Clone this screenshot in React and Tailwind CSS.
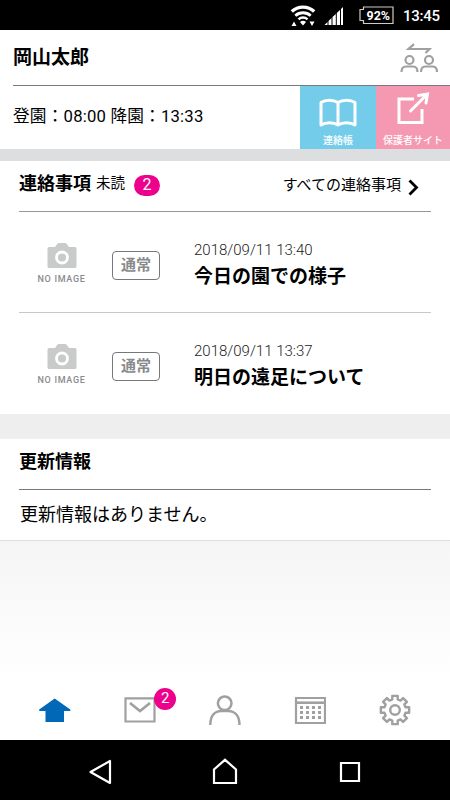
// App.jsx
import React from "react";

const MESSAGES = [
    { date: "2018/09/11 13:40", title: "今日の園での様子" },
    { date: "2018/09/11 13:37", title: "明日の遠足について" },
];

const StatusBar = () => (
    <div className="flex h-[30px] bg-black text-white">
        <svg width="450" height="30" viewBox="0 0 450 30" fill="none">
            {/* wifi */}
            <path d="M291.8 11.5a16.500 16.500 0 0 1 22.400 0" stroke="#fff" strokeWidth="3.4" />
            <path d="M295.300 15.700a11.500 11.500 0 0 1 15.400 0" stroke="#fff" strokeWidth="2.800" />
            <path d="M298.500 19.300a6.500 6.500 0 0 1 9 0" stroke="#fff" strokeWidth="2.400" />
            <path d="M300 22a4 4 0 0 1 6 0L303 25.500z" fill="#fff" />
            <path d="M291.500 26l2.500-4.500 2.500 4.500zM309.500 21.500h5L312 26z" fill="#fff" />
            {/* signal */}
            <path d="M324.500 25l3-3v3zM328.500 21l3-3v7h-3zM332.500 17l3.300-3v11h-3.300zM336.800 13l3.200-3v15h-3.200zM341 9l2-2v18h-2z" fill="#fff" />
            {/* battery */}
            <path d="M363.500 7H393v16.500h-29.500v-3H360V9.500h3.500z" stroke="#ccc" strokeWidth="1.200" />
            <text x="366.500" y="19.700" fill="#fff" fontFamily="Roboto" fontSize="12.500" fontWeight="700" textLength="23.500" lengthAdjust="spacingAndGlyphs">92%</text>
            <text x="403" y="21" fill="#fff" fontFamily="Roboto" fontSize="15" fontWeight="500" textLength="37">13:45</text>
        </svg>
    </div>
);

const SwitchUserIcon = () => (
    <svg width="38" height="30" viewBox="0 0 38 30" fill="none" stroke="#a0a0a0" strokeWidth="2.200">
        <path d="M14 1.200L8.500 6h21L25.500 10" />
        <circle cx="9.500" cy="17" r="4" />
        <circle cx="29" cy="17" r="4" />
        <path d="M1.500 29c0-4 2-5.500 4.500-5.500h7c2.500 0 4.500 1.500 4.500 5.500M21 29c0-4 2-5.500 4.500-5.500h7c2.500 0 4.500 1.500 4.500 5.500" />
    </svg>
);

const BookIcon = () => (
    <svg width="38" height="30" viewBox="0 0 38 30" fill="none" stroke="#fff" strokeWidth="3" strokeLinejoin="round">
        <path d="M19 4.500C14.500 1.500 6.500 1.500 2 4.500v22.500c4.500-3 12.500-3 17 0 4.500-3 12.500-3 17 0V4.500C31.500 1.500 23.500 1.500 19 4.500zM19 4.500V27" />
    </svg>
);

const ExternalIcon = () => (
    <svg width="34" height="34" viewBox="0 0 34 34" fill="none" stroke="#fff" strokeWidth="3" strokeLinecap="round">
        <path d="M18 8H3v23.500h23V18" strokeLinecap="butt" />
        <path d="M14.500 20L31.500 3M22.500 4.500l9-1.500-1.500 9" />
    </svg>
);

const NoImage = () => (
    <div className="flex w-[48px] flex-col items-center">
        <svg className="ml-[2px]" width="30" height="26" viewBox="0 0 30 26" fill="#c9caca">
            <path d="M2 4h6l2.500-3.500Q11 0 12 0h6q1 0 1.500.500L22 4h6q1.500 0 1.500 1.500v18q0 1.500-1.500 1.500H2Q.500 25 .500 23.500v-18Q.500 4 2 4z" />
            <circle cx="15" cy="14.500" r="5.500" fill="none" stroke="#fff" strokeWidth="2.800" />
        </svg>
        <span className="mt-[5px] ml-[1px] whitespace-nowrap font-['Roboto'] text-[9px] leading-[11px] font-medium tracking-[0.700px] text-[#8a8b8c]">NO IMAGE</span>
    </div>
);

const MessageRow = ({ date, title }) => (
    <div className="flex h-[101px] pt-[31px] pl-[18px]">
        <NoImage />
        <span className="mt-[8px] ml-[27px] flex h-[29px] w-[48px] items-center justify-center rounded-[4px] border border-[#77787b] text-[15px] leading-[27px] font-bold text-[#898a8c]">通常</span>
        <div className="ml-[34px] -mt-[2px]">
            <p className="font-['Roboto'] text-[15px] leading-[18px] font-light text-[#222]">{date}</p>
            <p className="mt-[5px] text-[19px] leading-[26px] font-bold">{title}</p>
        </div>
    </div>
);

const gearPath = () => {
    const pts = [];
    for (let i = 0; i < 8; i++) {
        const base = (i * Math.PI) / 4;
        [[-0.250, 10.900], [-0.190, 14.400], [0.190, 14.400], [0.250, 10.900]].forEach(([a, r]) => {
            pts.push(`${(16 + r * Math.cos(base + a)).toFixed(2)} ${(16 + r * Math.sin(base + a)).toFixed(2)}`);
        });
    }
    return `M${pts.join("L")}z`;
};

const TabBar = () => (
    <div className="grid h-[60px] grid-cols-5 px-[12px] pt-[14px] text-[#a0a0a0]">
        <div className="flex justify-center">
            <svg width="32" height="32" viewBox="0 0 32 32" fill="#0068b7">
                <path d="M15.700 4.500L31.300 15.500v1.500H25V28H6.500V17H.200v-1.500z" />
            </svg>
        </div>
        <div className="relative flex justify-center">
            <svg width="32" height="32" viewBox="0 0 32 32" fill="none" stroke="currentColor" strokeWidth="2.200">
                <path d="M1.500 4.300h29v23.200h-29z" />
                <path d="M6 9l10 8 10-8" strokeWidth="2.600" />
            </svg>
            <span className="absolute -top-[6px] left-[57px] flex size-[22px] items-center justify-center rounded-full bg-[#ec008c] pb-[2px] font-['Roboto'] text-[15px] leading-[20px] text-white">2</span>
        </div>
        <div className="flex justify-center">
            <svg width="32" height="32" viewBox="0 0 32 32" fill="none" stroke="currentColor" strokeWidth="2.500">
                <circle cx="15.700" cy="9.300" r="6.800" />
                <path d="M1.300 31C1.300 21.500 6 17 12.500 17h6.500c6.500 0 11.500 4.500 11.500 14" />
            </svg>
        </div>
        <div className="flex justify-center">
            <svg width="32" height="32" viewBox="0 0 32 32" fill="none" stroke="currentColor" strokeWidth="2.200">
                <path d="M2 4h29v25H2z" />
                <path d="M1.500 8.700h30" strokeWidth="2.600" />
                <path d="M6 13.500h22M6 18.500h22M6 23.500h22" strokeWidth="2.800" strokeDasharray="3 3" />
            </svg>
        </div>
        <div className="flex justify-center">
            <svg width="32" height="32" viewBox="0 0 32 32" fill="none" stroke="currentColor" strokeWidth="2.400">
                <path d={gearPath()} strokeLinejoin="round" />
                <circle cx="16" cy="16" r="4.800" />
            </svg>
        </div>
    </div>
);

const AndroidNav = () => (
    <div className="flex h-[60px] items-center justify-between bg-black pt-[3px] pr-[88px] pl-[88px]">
        <svg width="24" height="26" viewBox="0 0 24 26" fill="none" stroke="#fff" strokeWidth="2.200">
            <path d="M22 2v22L2.500 13z" strokeLinejoin="round" />
        </svg>
        <svg width="27" height="27" viewBox="0 0 27 27" fill="none" stroke="#fff" strokeWidth="2.200">
            <path d="M2 25V11.500L13 1.800 24 11.500V25z" />
        </svg>
        <svg width="24" height="24" viewBox="0 0 24 24" fill="none" stroke="#fff" strokeWidth="2.200">
            <path d="M3 3h18v18H3z" />
        </svg>
    </div>
);

const App = () => {
    return (
        <div className="flex h-[800px] w-[450px] flex-col overflow-hidden bg-white font-['Roboto','Noto_Sans_CJK_JP',sans-serif] text-black">
            <StatusBar />

            <header className="ml-[13px] flex h-[56px] justify-between border-b border-[#77787b] pr-[12px]">
                <h1 className="mt-[14px] text-[19px] leading-[28px] font-bold">岡山太郎</h1>
                <div className="mt-[13px]">
                    <SwitchUserIcon />
                </div>
            </header>
            <div className="flex h-[63px] pl-[13px]">
                <p className="flex-1 pt-[19px] text-[16.700px] leading-[24px] tracking-[0.180px]">登園：08:00 降園：13:33</p>
                <div className="flex w-[76px] flex-col items-center bg-[#73cdea] pt-[12px]">
                    <BookIcon />
                    <span className="mt-[6px] text-[10px] leading-[14px] font-medium text-white">連絡帳</span>
                </div>
                <div className="flex w-[74px] flex-col items-center bg-[#f598b1] pt-[5px]">
                    <ExternalIcon />
                    <span className="mt-[9px] text-[10px] leading-[14px] font-medium whitespace-nowrap text-white">保護者サイト</span>
                </div>
            </div>

            <div className="h-[12px] bg-[#dddee0]"></div>

            <section className="h-[253px] px-[19px]">
                <div className="flex h-[51px] border-b border-[#999]">
                    <h2 className="mt-[9px] text-[18px] leading-[28px] font-bold">連絡事項</h2>
                    <span className="mt-[11px] ml-[5px] text-[14.500px] leading-[24px]">未読</span>
                    <span className="mt-[14px] ml-[9px] flex h-[21px] w-[26px] items-center justify-center rounded-full bg-[#ec008c] pb-[2px] text-[16px] text-white">2</span>
                    <span className="mt-[12px] ml-auto text-[15px] leading-[24px]">すべての連絡事項</span>
                    <svg className="mt-[18px] mr-[12px] ml-[7px]" width="11" height="17" viewBox="0 0 11 17" fill="none" stroke="#000" strokeWidth="2.800">
                        <path d="M1.500 1.500L8.500 8.500l-7 7" />
                    </svg>
                </div>
                <div className="divide-y divide-[#c8c8c8]">
                    {MESSAGES.map((m) => (
                        <MessageRow key={m.date} date={m.date} title={m.title} />
                    ))}
                </div>
            </section>

            <div className="h-[25px] bg-[#eee]"></div>

            <section className="h-[102px] border-b border-[#ddd] px-[19px]">
                <h2 className="h-[51px] border-b border-[#77787b] pt-[9px] text-[18px] leading-[28px] font-bold">更新情報</h2>
                <p className="pt-[11px] pl-[1px] text-[18px] leading-[28px]">更新情報はありません。</p>
            </section>

            <div className="flex-1 bg-linear-to-b from-[#f5f5f5] to-white"></div>
            <TabBar />
            <AndroidNav />
        </div>
    );
};

export default App;
